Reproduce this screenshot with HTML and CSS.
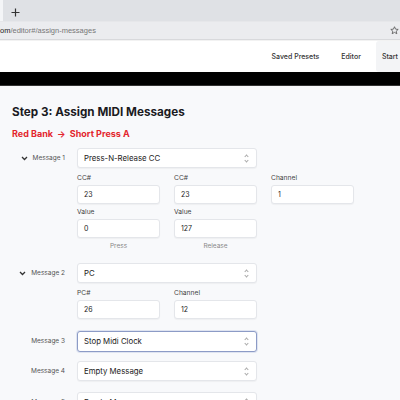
FILE: index.html
```html
<!DOCTYPE html>
<html lang="en">

<head>
    <meta charset="UTF-8">
    <meta name="viewport" content="width=device-width, initial-scale=1.0">
    <title>editor</title>
    <link rel="stylesheet" href="styles.css">
</head>

<body>
    <div class="tabs">
        <div class="tab-edge"></div>
        <svg class="tab-new" width="9" height="9" viewBox="0 0 9 9"><path d="M4.5 0.5v8M0.5 4.5h8" stroke="#333" stroke-width="1.2"/></svg>
    </div>
    <div class="urlbar">
        <div class="url"><b>om</b>/editor#/assign-messages</div>
        <svg class="star" width="9" height="9" viewBox="0 0 10 10"><path d="M5 0.8l1.2 2.7 2.9 0.3-2.2 1.9 0.7 2.9L5 7.1 2.4 8.6l0.7-2.9L0.9 3.8l2.9-0.3z" fill="none" stroke="#555" stroke-width="0.9"/></svg>
    </div>

    <div class="nav">
        <div class="nav-item presets">Saved Presets</div>
        <div class="nav-item editor">Editor</div>
        <div class="nav-item start">Start</div>
    </div>
    <div class="blackbar"></div>

    <div class="page">
        <h1>Step 3: Assign MIDI Messages</h1>
        <div class="crumb">Red Bank <span class="arrow">&rarr;</span> Short Press A</div>

        <div class="message">
            <div class="msg-label">
                <svg class="chev" width="7" height="5" viewBox="0 0 7 5"><path d="M1 1l2.5 2.5L6 1" fill="none" stroke="#333" stroke-width="1.3"/></svg>
                Message 1
            </div>
            <div class="msg-body">
                <div class="select">Press-N-Release CC <span class="updown"></span></div>
                <div class="fields">
                    <div class="field"><label>CC#</label><div class="input">23</div></div>
                    <div class="field"><label>CC#</label><div class="input">23</div></div>
                    <div class="field"><label>Channel</label><div class="input">1</div></div>
                    <div class="field"><label>Value</label><div class="input">0</div><div class="caption">Press</div></div>
                    <div class="field"><label>Value</label><div class="input">127</div><div class="caption">Release</div></div>
                </div>
            </div>
        </div>

        <div class="message">
            <div class="msg-label">
                <svg class="chev" width="7" height="5" viewBox="0 0 7 5"><path d="M1 1l2.5 2.5L6 1" fill="none" stroke="#333" stroke-width="1.3"/></svg>
                Message 2
            </div>
            <div class="msg-body">
                <div class="select">PC <span class="updown"></span></div>
                <div class="fields">
                    <div class="field"><label>PC#</label><div class="input">26</div></div>
                    <div class="field"><label>Channel</label><div class="input">12</div></div>
                </div>
            </div>
        </div>

        <div class="message simple">
            <div class="msg-label">Message 3</div>
            <div class="msg-body">
                <div class="select focus">Stop Midi Clock <span class="updown"></span></div>
            </div>
        </div>

        <div class="message simple">
            <div class="msg-label">Message 4</div>
            <div class="msg-body">
                <div class="select">Empty Message <span class="updown"></span></div>
            </div>
        </div>

        <div class="message simple last">
            <div class="msg-label">Message 5</div>
            <div class="msg-body">
                <div class="select">Empty Message <span class="updown"></span></div>
            </div>
        </div>
    </div>
</body>

</html>
```

FILE: styles.css
```css
body {
    margin: 0;
    font-family: Inter, "Liberation Sans", sans-serif;
    background-color: #f8f9fb;
    color: #222;
    overflow: hidden;
    height: 400px;
}

/* browser chrome */
.tabs {
    height: 21px;
    background-color: #dfe1e5;
    display: flex;
    align-items: center;
}

.tab-edge {
    width: 3px;
    height: 21px;
    background-color: #f4f5f7;
}

.tab-new {
    margin-left: 8px;
    margin-top: 3px;
}

.urlbar {
    height: 17px;
    background-color: #ebecef;
    border-top: 1px solid #e6e7ea;
    display: flex;
    align-items: center;
    justify-content: space-between;
    border-bottom: 1px solid #d8d9dc;
}

.url {
    font-size: 7.5px;
    color: #777;
    font-family: "Liberation Sans", sans-serif;
}

.url b {
    font-weight: normal;
    color: #222;
}

.star {
    margin-right: 1px;
}

/* app nav */
.nav {
    height: 31px;
    background-color: #fff;
    display: flex;
    align-items: center;
    justify-content: flex-end;
    border-top: 1px solid #f2f2f2;
}

.nav-item {
    font-size: 7px;
    font-weight: 500;
    color: #333;
    white-space: nowrap;
}

.presets {
    margin-right: 22px;
}

.editor {
    margin-right: 15px;
}

.start {
    background-color: #f3f4f6;
    padding: 11px 2px 11px 6px;
    border-radius: 3px 0 0 3px;
}

.blackbar {
    height: 13px;
    background-color: #000;
    border-bottom: 1px solid #333;
}

/* page */
.page {
    padding: 17px 0 0 12px;
}

h1 {
    font-size: 11.7px;
    font-weight: 700;
    margin: 0;
    line-height: 18px;
    color: #1b1b1f;
}

.crumb {
    margin-top: 6px;
    font-size: 9px;
    font-weight: 700;
    color: #e3252d;
    line-height: 14px;
}

.arrow {
    margin: 0 2px;
}

.message {
    display: flex;
    margin-top: 7px;
}

.message + .message {
    margin-top: 12px;
}

.message.simple + .message.simple {
    margin-top: 9px;
}

.message.simple + .message.last {
    margin-top: 11px;
}

.msg-label {
    width: 53px;
    padding-right: 12px;
    display: flex;
    align-items: center;
    justify-content: flex-end;
    height: 20px;
    font-size: 6.5px;
    color: #555;
    white-space: nowrap;
    gap: 5px;
}

.chev {
    display: block;
}

.msg-body {
    width: 280px;
}

.select {
    width: 180px;
    height: 20px;
    box-sizing: border-box;
    background-color: #fff;
    border: 1px solid #e4e6ea;
    border-radius: 3px;
    box-shadow: 0 1px 1px rgba(0, 0, 0, 0.04);
    font-size: 7.8px;
    line-height: 18px;
    padding-left: 6px;
    position: relative;
}

.select.focus {
    height: 21px;
    border-color: #8c9bc6;
    box-shadow: 0 0 0 1px #dfe4f1;
}

.updown {
    position: absolute;
    right: 7px;
    top: 5px;
    width: 4px;
    height: 8px;
}

.updown::before,
.updown::after {
    content: "";
    position: absolute;
    left: 0;
    width: 2px;
    height: 2px;
    border: solid #aaa;
    border-width: 1px 1px 0 0;
}

.updown::before {
    top: 1px;
    transform: rotate(-45deg);
}

.updown::after {
    top: 5px;
    transform: rotate(135deg);
}

.fields {
    display: grid;
    grid-template-columns: 83px 83px 83px;
    column-gap: 14px;
    row-gap: 3px;
    margin-top: 5px;
}

.field label {
    display: block;
    font-size: 6.7px;
    line-height: 10px;
    color: #444;
    margin-bottom: 2px;
}

.input {
    height: 19px;
    box-sizing: border-box;
    background-color: #fff;
    border: 1px solid #e4e6ea;
    border-radius: 3px;
    box-shadow: 0 1px 1px rgba(0, 0, 0, 0.04);
    font-size: 7px;
    line-height: 17px;
    padding-left: 6px;
}

.caption {
    text-align: center;
    font-size: 6.5px;
    color: #888;
    line-height: 10px;
    margin-top: 3px;
}
```
